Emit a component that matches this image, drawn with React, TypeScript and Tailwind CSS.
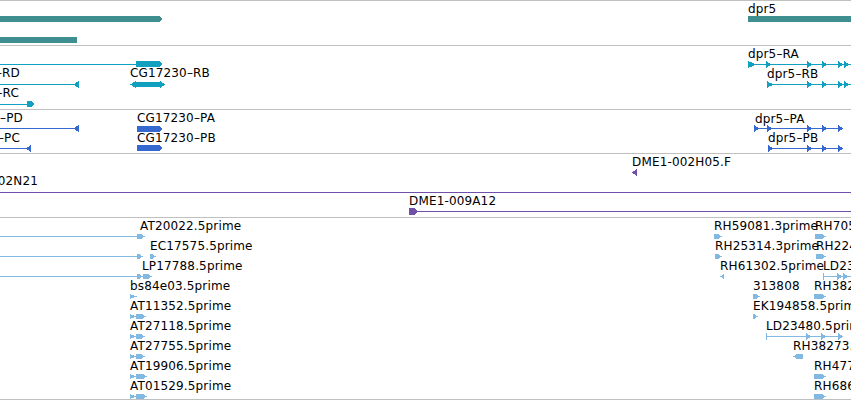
import React from 'react'

type Shape =
  | { k: 'r'; x1: number; x2: number; y1: number; y2: number }
  | { k: 'tr'; x1: number; x2: number; y1: number; y2: number }
  | { k: 'tl'; x1: number; x2: number; y1: number; y2: number }
  | { k: 'ar'; x: number; y: number; w?: number; h?: number }
  | { k: 'al'; x: number; y: number; w?: number; h?: number }

interface Label {
  t: string
  x?: number
  end?: number
  y: number
}

interface TrackDef {
  top: number
  h: string
  color: string
  shapes: Shape[]
  labels: Label[]
  last?: boolean
}

const GENE = '#3f8e90'
const MRNA = '#12a0c1'
const PROT = '#3569d0'
const BAC = '#7050a8'
const EST = '#82b9e2'

// line helper: one pixel row
const ln = (x1: number, x2: number, y: number): Shape => ({ k: 'r', x1, x2, y1: y, y2: y })

function renderShape(s: Shape, i: number, color: string) {
  if (s.k === 'r') {
    return <rect key={i} x={s.x1} y={s.y1} width={s.x2 - s.x1} height={s.y2 - s.y1 + 1} fill={color} />
  }
  if (s.k === 'tr' || s.k === 'tl') {
    const top = s.y1
    const bot = s.y2 + 1
    const mid = (top + bot) / 2
    const tip = Math.min(4, s.x2 - s.x1)
    const pts =
      s.k === 'tr'
        ? [[s.x1, top], [s.x2 - tip, top], [s.x2, mid], [s.x2 - tip, bot], [s.x1, bot]]
        : [[s.x1, mid], [s.x1 + tip, top], [s.x2, top], [s.x2, bot], [s.x1 + tip, bot]]
    return <polygon key={i} points={pts.map((p) => p.join(',')).join(' ')} fill={color} />
  }
  const w = s.w ?? 5
  const h = s.h ?? 7
  const mid = s.y + 0.5
  const pts =
    s.k === 'ar'
      ? [[s.x, mid - h / 2], [s.x + w, mid], [s.x, mid + h / 2]]
      : [[s.x + w, mid - h / 2], [s.x, mid], [s.x + w, mid + h / 2]]
  return <polygon key={i} points={pts.map((p) => p.join(',')).join(' ')} fill={color} />
}

// small exon arrows along a transcript line
const marks = (xs: number[], y: number): Shape[] => xs.map((x) => ({ k: 'ar', x, y, w: 5, h: 7 }))

const tracks: TrackDef[] = [
  {
    top: 0,
    h: 'h-[45px]',
    color: GENE,
    shapes: [
      { k: 'tr', x1: 0, x2: 163, y1: 16, y2: 21 },
      { k: 'r', x1: 0, x2: 77, y1: 37, y2: 42 },
      { k: 'tr', x1: 748, x2: 856, y1: 16, y2: 21 },
    ],
    labels: [{ t: 'dpr5', x: 748, y: 2 }],
  },
  {
    top: 45,
    h: 'h-[64px]',
    color: MRNA,
    shapes: [
      ln(0, 136, 64),
      { k: 'tr', x1: 136, x2: 163, y1: 61, y2: 66 },
      ln(0, 79, 84),
      { k: 'al', x: 73, y: 84, w: 6, h: 7 },
      { k: 'r', x1: 134, x2: 161, y1: 82, y2: 86 },
      { k: 'al', x: 130, y: 84, w: 6, h: 7 },
      { k: 'ar', x: 160, y: 84, w: 5, h: 7 },
      ln(0, 28, 104),
      { k: 'tr', x1: 27, x2: 35, y1: 101, y2: 106 },
      // dpr5-RA
      ln(748, 851, 64),
      { k: 'ar', x: 748, y: 64, w: 9, h: 7 },
      ...marks([766, 807, 822, 838, 844], 64),
      // dpr5-RB
      ln(767, 851, 84),
      { k: 'r', x1: 767, x2: 768, y1: 81, y2: 87 },
      { k: 'ar', x: 767, y: 84, w: 7, h: 6 },
      ...marks([807, 822, 838, 844], 84),
    ],
    labels: [
      { t: 'CG17230–RD', end: 20, y: 66 },
      { t: 'CG17230–RB', x: 130, y: 66 },
      { t: 'CG17230–RC', end: 19, y: 86 },
      { t: 'dpr5–RA', x: 748, y: 47 },
      { t: 'dpr5–RB', x: 767, y: 67 },
    ],
  },
  {
    top: 109,
    h: 'h-[44px]',
    color: PROT,
    shapes: [
      ln(0, 79, 128),
      { k: 'al', x: 73, y: 128, w: 6, h: 7 },
      { k: 'tr', x1: 137, x2: 163, y1: 126, y2: 131 },
      ln(0, 31, 148),
      { k: 'al', x: 26, y: 148, w: 5, h: 7 },
      { k: 'tr', x1: 137, x2: 163, y1: 145, y2: 150 },
      // dpr5-PA
      ln(754, 843, 128),
      { k: 'r', x1: 754, x2: 755, y1: 125, y2: 131 },
      { k: 'ar', x: 754, y: 128, w: 6, h: 6 },
      ...marks([767, 807, 822, 838], 128),
      // dpr5-PB
      ln(768, 843, 148),
      { k: 'r', x1: 768, x2: 769, y1: 145, y2: 151 },
      { k: 'ar', x: 768, y: 148, w: 6, h: 6 },
      ...marks([807, 822, 838], 148),
    ],
    labels: [
      { t: 'CG17230–PD', end: 23, y: 111 },
      { t: 'CG17230–PA', x: 137, y: 111 },
      { t: 'CG17230–PC', end: 20, y: 131 },
      { t: 'CG17230–PB', x: 137, y: 131 },
      { t: 'dpr5–PA', x: 755, y: 112 },
      { t: 'dpr5–PB', x: 768, y: 131 },
    ],
  },
  {
    top: 153,
    h: 'h-[64px]',
    color: BAC,
    shapes: [
      ln(0, 851, 192),
      { k: 'al', x: 632, y: 172, w: 5, h: 7 },
      ln(409, 851, 211),
      { k: 'tr', x1: 409, x2: 418, y1: 208, y2: 214 },
    ],
    labels: [
      { t: 'DME1-002N21', end: 38, y: 174 },
      { t: 'DME1-002H05.F', x: 632, y: 155 },
      { t: 'DME1-009A12', x: 409, y: 194 },
    ],
  },
]

// EST rows: label top 219 + 20*i, glyph row 236 + 20*i
const estRow = (i: number) => 236 + i * 20
const est = (x1: number, x2: number, i: number, dir: 'tr' | 'tl' = 'tr'): Shape => ({
  k: dir,
  x1,
  x2,
  y1: estRow(i) - 2,
  y2: estRow(i) + 2,
})
const estPair = (x: number, end: number, i: number): Shape[] => [
  { k: 'ar', x, y: estRow(i), w: 7, h: 5 },
  est(x + 6, end, i),
]

const estShapes: Shape[] = [
  ln(0, 138, estRow(0)),
  est(137, 145, 0),
  ln(0, 138, estRow(1)),
  est(137, 143, 1),
  est(150, 156, 1),
  ln(0, 138, estRow(2)),
  est(137, 143, 2),
  est(143, 152, 2),
  { k: 'ar', x: 130, y: estRow(3), w: 7, h: 5 },
  ...estPair(130, 146, 4),
  ...estPair(130, 145, 5),
  ...estPair(130, 145, 6),
  ...estPair(130, 147, 7),
  ...estPair(130, 147, 8),
  // right side
  est(714, 722, 0),
  est(815, 826, 0),
  est(715, 722, 1),
  est(816, 826, 1),
  { k: 'al', x: 720, y: estRow(2), w: 4, h: 5 },
  ln(823, 851, estRow(2)),
  { k: 'r', x1: 823, x2: 824, y1: estRow(2) - 3, y2: estRow(2) + 3 },
  ...marks([837, 843], estRow(2)),
  est(753, 760, 3),
  est(814, 826, 3),
  est(753, 758, 4),
  ln(766, 843, estRow(5)),
  { k: 'r', x1: 766, x2: 767, y1: estRow(5) - 3, y2: estRow(5) + 3 },
  ...marks([806, 821, 838], estRow(5)),
  est(793, 803, 6, 'tl'),
  est(814, 826, 7),
  est(814, 826, 8),
]

const estLabels: Label[] = [
  ['AT20022.5prime', 140],
  ['EC17575.5prime', 150],
  ['LP17788.5prime', 142],
  ['bs84e03.5prime', 130],
  ['AT11352.5prime', 130],
  ['AT27118.5prime', 130],
  ['AT27755.5prime', 130],
  ['AT19906.5prime', 130],
  ['AT01529.5prime', 130],
].map(([t, x], i) => ({ t: t as string, x: x as number, y: 219 + i * 20 }))

const estRight: Label[] = [
  { t: 'RH59081.3prime', x: 714, y: 219 },
  { t: 'RH70527.3prime', x: 815, y: 219 },
  { t: 'RH25314.3prime', x: 715, y: 239 },
  { t: 'RH22416.3prime', x: 816, y: 239 },
  { t: 'RH61302.5prime', x: 720, y: 259 },
  { t: 'LD23561.5prime', x: 823, y: 259 },
  { t: '313808', x: 753, y: 279 },
  { t: 'RH38216.3prime', x: 814, y: 279 },
  { t: 'EK194858.5prime', x: 753, y: 299 },
  { t: 'LD23480.5prime', x: 766, y: 319 },
  { t: 'RH38273.3prime', x: 793, y: 339 },
  { t: 'RH47703.3prime', x: 814, y: 359 },
  { t: 'RH68616.3prime', x: 814, y: 379 },
]

tracks.push({
  top: 217,
  h: 'h-[183px]',
  color: EST,
  shapes: estShapes,
  labels: [...estLabels, ...estRight],
  last: true,
})

function Track({ def }: { def: TrackDef }) {
  // children are placed inside the padding box, one pixel below the top border
  const o = def.top + 1
  return (
    <div
      className={`relative w-full shrink-0 overflow-hidden border-t border-[#c0c0c0] ${def.h} ${
        def.last ? 'border-b' : ''
      }`}
    >
      <svg className="absolute left-0 top-0" width={851} height={200} shapeRendering="crispEdges">
        <g transform={`translate(0,${-o})`}>{def.shapes.map((s, i) => renderShape(s, i, def.color))}</g>
      </svg>
      {def.labels.map((l, i) =>
        l.end !== undefined ? (
          <div
            key={i}
            className="absolute whitespace-nowrap text-right text-[12px] leading-[14px] tracking-[0.15px] text-black"
            style={{ left: l.end - 300, width: 300, top: l.y - o }}
          >
            {l.t}
          </div>
        ) : (
          <div
            key={i}
            className="absolute whitespace-nowrap text-[12px] leading-[14px] tracking-[0.15px] text-black"
            style={{ left: l.x, top: l.y - o }}
          >
            {l.t}
          </div>
        )
      )}
    </div>
  )
}

export default function App() {
  return (
    <div className="flex h-[401px] w-[851px] flex-col overflow-hidden bg-white font-['DejaVu_Sans',sans-serif]">
      {tracks.map((t) => (
        <Track key={t.top} def={t} />
      ))}
    </div>
  )
}
